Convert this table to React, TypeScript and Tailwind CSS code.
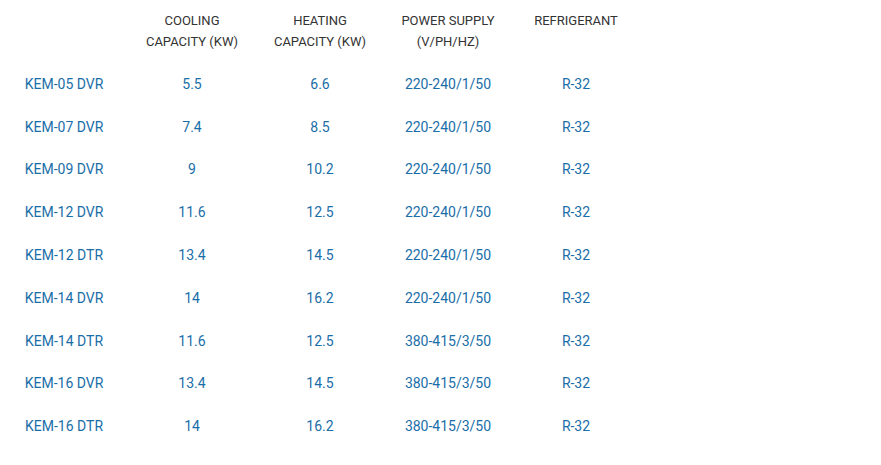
const rows = [
  ['KEM-05 DVR', '5.5', '6.6', '220-240/1/50', 'R-32'],
  ['KEM-07 DVR', '7.4', '8.5', '220-240/1/50', 'R-32'],
  ['KEM-09 DVR', '9', '10.2', '220-240/1/50', 'R-32'],
  ['KEM-12 DVR', '11.6', '12.5', '220-240/1/50', 'R-32'],
  ['KEM-12 DTR', '13.4', '14.5', '220-240/1/50', 'R-32'],
  ['KEM-14 DVR', '14', '16.2', '220-240/1/50', 'R-32'],
  ['KEM-14 DTR', '11.6', '12.5', '380-415/3/50', 'R-32'],
  ['KEM-16 DVR', '13.4', '14.5', '380-415/3/50', 'R-32'],
  ['KEM-16 DTR', '14', '16.2', '380-415/3/50', 'R-32'],
]

const headers = [
  ['', ''],
  ['COOLING', 'CAPACITY (KW)'],
  ['HEATING', 'CAPACITY (KW)'],
  ['POWER SUPPLY', '(V/PH/HZ)'],
  ['REFRIGERANT', ''],
]

export default function App() {
  return (
    <div className="w-[881px] h-[465px] bg-white font-['Roboto',sans-serif]">
      <div className="w-[640px]">
        <div className="grid grid-cols-5 h-[63px] items-start pt-[10px] text-[13px] text-[#333] leading-[21px]">
          {headers.map((h, i) => (
            <div key={i} className="text-center">
              <div>{h[0]}</div>
              {h[1] && <div>{h[1]}</div>}
            </div>
          ))}
        </div>
        {rows.map(r => (
          <div key={r[0]} className="grid grid-cols-5 h-[42.8px] items-center text-[14px] text-[#1a6ea8]">
            {r.map((c, i) => (
              <div key={i} className="text-center">{c}</div>
            ))}
          </div>
        ))}
      </div>
    </div>
  )
}
